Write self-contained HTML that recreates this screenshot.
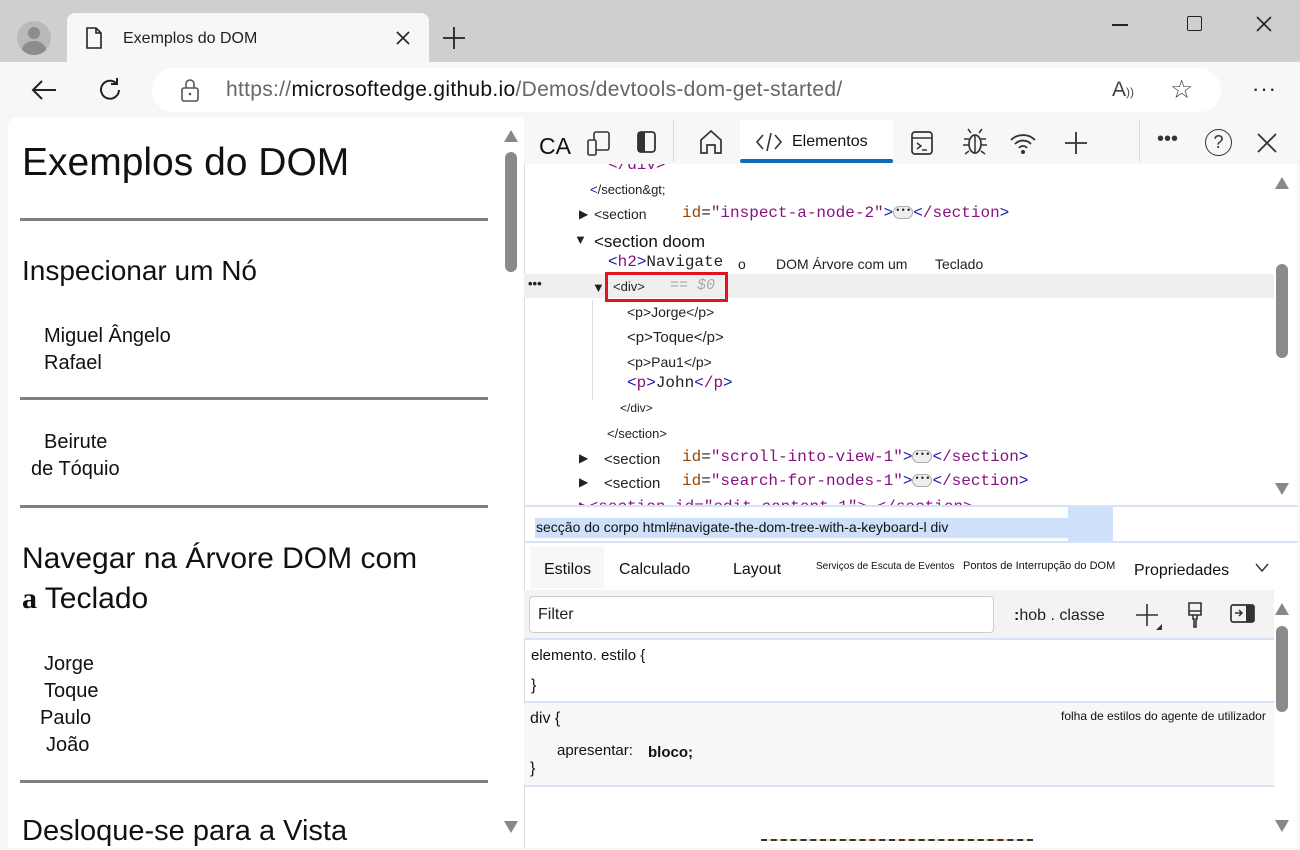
<!DOCTYPE html>
<html><head><meta charset="utf-8"><style>
*{margin:0;padding:0;box-sizing:border-box}
body{width:1300px;height:850px;overflow:hidden;background:#cfcfcf;font-family:"Liberation Sans",sans-serif;position:relative;color:#222}
.a{position:absolute}
.mono{font-family:"Liberation Mono",monospace}
.hr{position:absolute;left:20px;width:468px;height:3px;background:#808080}
.tag{color:#881280}.att{color:#994500}.val{color:#1a1aa6}
.dots{display:inline-block;width:20px;height:13px;border:1px solid #aaa;border-radius:7px;background:#eee;font-size:9px;line-height:9px;text-align:center;vertical-align:middle}
.arr{position:absolute;width:0;height:0;border-left:7px solid transparent;border-right:7px solid transparent}
.up{border-bottom:12px solid #888}.dn{border-top:12px solid #888}
</style></head><body>
<div class="a" style="left:0;top:0;width:1300px;height:62px;background:#cfcfcf;border-radius:8px 8px 0 0"></div>
<div class="a" style="left:17px;top:21px;width:34px;height:34px;border-radius:50%;background:#b9b9b9;overflow:hidden"><div class="a" style="left:11px;top:6px;width:12px;height:12px;border-radius:50%;background:#8c8c8c"></div><div class="a" style="left:5px;top:20px;width:24px;height:18px;border-radius:50%;background:#8c8c8c"></div></div>
<div class="a" style="left:67px;top:13px;width:362px;height:50px;background:#f7f7f7;border-radius:8px 8px 0 0"></div>
<svg class="a" style="left:84px;top:26px" width="20" height="24"><path d="M3 2h9l5 5v15H3z M12 2v5h5" fill="none" stroke="#222" stroke-width="1.6"/></svg>
<div class="a" style="left:123px;top:30px;font-size:16px">Exemplos do DOM</div>
<svg class="a" style="left:396px;top:31px" width="14" height="14"><path d="M1 1l12 12M13 1L1 13" stroke="#222" stroke-width="1.6"/></svg>
<svg class="a" style="left:442px;top:26px" width="24" height="24"><path d="M12 1v22M1 12h22" stroke="#222" stroke-width="1.8"/></svg>
<div class="a" style="left:1112px;top:24px;width:16px;height:1.5px;background:#222"></div>
<div class="a" style="left:1187px;top:16px;width:15px;height:15px;border:1.5px solid #222;border-radius:2px"></div>
<svg class="a" style="left:1256px;top:16px" width="16" height="16"><path d="M1 1l14 14M15 1L1 15" stroke="#222" stroke-width="1.6"/></svg>
<div class="a" style="left:0;top:62px;width:1300px;height:788px;background:#f7f7f7"></div>
<svg class="a" style="left:30px;top:78px" width="28" height="24"><path d="M26 12H3M12 3L3 12l9 9" fill="none" stroke="#222" stroke-width="2"/></svg>
<svg class="a" style="left:97px;top:76px" width="28" height="28"><path d="M22 14a9 9 0 1 1-3-7M20 2v6h-6" fill="none" stroke="#222" stroke-width="2"/></svg>
<div class="a" style="left:152px;top:68px;width:1069px;height:44px;background:#fff;border-radius:22px"></div>
<svg class="a" style="left:180px;top:78px" width="22" height="26"><rect x="2" y="10" width="16" height="13" rx="2" fill="none" stroke="#555" stroke-width="1.6"/><path d="M6 10V6a4 4 0 0 1 8 0v4" fill="none" stroke="#555" stroke-width="1.6"/><circle cx="10" cy="16" r="1.3" fill="#555"/></svg>
<div class="a" style="left:226px;top:78px;font-size:21px;color:#666;letter-spacing:0.3px">https://<span style="color:#111">microsoftedge.github.io</span>/Demos/devtools-dom-get-started/</div>
<div class="a" style="left:1112px;top:78px;font-size:21px;color:#444">A<span style="font-size:12px">))</span></div>
<div class="a" style="left:1170px;top:74px;font-size:26px;color:#444">☆</div>
<div class="a" style="left:1252px;top:76px;font-size:22px;color:#222;letter-spacing:1px">···</div>
<!-- page -->
<div class="a" style="left:8px;top:118px;width:492px;height:730px;background:#fff;border-radius:8px 0 0 0"></div>
<div class="a" style="left:500px;top:118px;width:24px;height:730px;background:#fff"></div>
<div class="a" style="left:505px;top:152px;width:12px;height:120px;border-radius:6px;background:#8a8a8a"></div>
<div class="arr up" style="left:504px;top:130px"></div>
<div class="arr dn" style="left:504px;top:821px"></div>
<div class="a" style="left:22px;top:141px;font-size:39px;color:#111">Exemplos do DOM</div>
<div class="hr" style="top:218px"></div>
<div class="a" style="left:22px;top:255px;font-size:28px;color:#111">Inspecionar um Nó</div>
<div class="a" style="left:44px;top:323px;font-size:20px;line-height:27px;color:#111">Miguel Ângelo<br>Rafael</div>
<div class="hr" style="top:397px"></div>
<div class="a" style="left:44px;top:431px;font-size:20px;color:#111">Beirute</div>
<div class="a" style="left:31px;top:458px;font-size:20px;color:#111">de Tóquio</div>
<div class="hr" style="top:505px"></div>
<div class="a" style="left:22px;top:539px;font-size:30px;line-height:40px;color:#111">Navegar na Árvore DOM com<br><b style="font-family:'Liberation Serif',serif">a</b> Teclado</div>
<div class="a" style="left:44px;top:653px;font-size:20px;color:#111">Jorge</div>
<div class="a" style="left:44px;top:680px;font-size:20px;color:#111">Toque</div>
<div class="a" style="left:40px;top:707px;font-size:20px;color:#111">Paulo</div>
<div class="a" style="left:46px;top:734px;font-size:20px;color:#111">João</div>
<div class="hr" style="top:780px"></div>
<div class="a" style="left:22px;top:815px;font-size:29px;color:#111">Desloque-se para a Vista</div>
<!-- devtools -->
<div class="a" style="left:524px;top:118px;width:774px;height:730px;background:#fff;border-left:1px solid #ddd"></div>
<div class="a" style="left:524px;top:118px;width:774px;height:46px;background:#f7f7f7"></div>
<div class="a" style="left:539px;top:133px;font-size:23px;color:#111">CA</div>
<svg class="a" style="left:586px;top:130px" width="26" height="28"><rect x="8" y="2" width="15" height="18" rx="2" fill="none" stroke="#333" stroke-width="1.6"/><rect x="2" y="10" width="8" height="15" rx="1.5" fill="#f7f7f7" stroke="#333" stroke-width="1.6"/></svg>
<svg class="a" style="left:636px;top:130px" width="22" height="24"><rect x="2" y="2" width="17" height="20" rx="3" fill="none" stroke="#333" stroke-width="1.8"/><rect x="2" y="2" width="7" height="20" fill="#333"/></svg>
<div class="a" style="left:673px;top:120px;width:1px;height:42px;background:#ddd"></div>
<svg class="a" style="left:697px;top:128px" width="28" height="28"><path d="M4 25V12l10-9 10 9v13h-6v-8h-8v8z" fill="none" stroke="#333" stroke-width="1.7"/></svg>
<div class="a" style="left:740px;top:120px;width:153px;height:42px;background:#fff"></div>
<div class="a" style="left:740px;top:159px;width:153px;height:4px;background:#0f6cbd;border-radius:2px"></div>
<svg class="a" style="left:755px;top:130px" width="28" height="24"><path d="M8 5l-6 7 6 7M20 5l6 7-6 7M16 3l-4 18" fill="none" stroke="#333" stroke-width="1.6"/></svg>
<div class="a" style="left:792px;top:133px;font-size:16px;color:#111">Elementos</div>
<svg class="a" style="left:910px;top:130px" width="28" height="28"><rect x="2" y="2" width="20" height="22" rx="3" fill="none" stroke="#333" stroke-width="1.7"/><path d="M2 8h20M7 13l4 3-4 3M12 20h5" fill="none" stroke="#333" stroke-width="1.5"/></svg>
<svg class="a" style="left:961px;top:127px" width="28" height="30"><ellipse cx="14" cy="17" rx="6" ry="9" fill="none" stroke="#333" stroke-width="1.7"/><path d="M8 12H3M20 12h5M8 18H2M20 18h6M8 24l-4 3M20 24l4 3M10 6l-3-4M18 6l3-4M14 8v18" fill="none" stroke="#333" stroke-width="1.5"/></svg>
<svg class="a" style="left:1008px;top:130px" width="30" height="26"><path d="M3 10a17 17 0 0 1 24 0M7 14a11 11 0 0 1 16 0M11 18a5 5 0 0 1 8 0" fill="none" stroke="#333" stroke-width="1.8"/><circle cx="15" cy="22" r="2" fill="#333"/></svg>
<svg class="a" style="left:1064px;top:131px" width="24" height="24"><path d="M12 1v22M1 12h22" stroke="#333" stroke-width="1.8"/></svg>
<div class="a" style="left:1139px;top:120px;width:1px;height:42px;background:#ddd"></div>
<div class="a" style="left:1157px;top:128px;font-size:20px;color:#333">•••</div>
<div class="a" style="left:1205px;top:129px;width:27px;height:27px;border:1.7px solid #333;border-radius:50%;text-align:center;font-size:18px;line-height:24px;color:#333">?</div>
<svg class="a" style="left:1257px;top:133px" width="20" height="20"><path d="M1 1l18 18M19 1L1 19" stroke="#333" stroke-width="1.8"/></svg>
<!-- DOM tree -->
<div class="a" style="left:524px;top:164px;width:750px;height:342px;overflow:hidden;font-size:13px;color:#222">
<div class="a mono tag" style="left:84px;top:-8px;font-size:16px">&lt;/div&gt;</div>
<div class="a" style="left:66px;top:18px;font-size:13px"><span style="color:#1a1aa6">&lt;</span>/section&amp;gt;</div>
<div class="a" style="left:55px;top:43px;font-size:12px">▶</div>
<div class="a" style="left:70px;top:42px;font-size:14px">&lt;section</div>
<div class="a mono" style="left:158px;top:40px;font-size:16px"><span class="att">id</span>=<span style="color:#881280">"inspect-a-node-2"</span><span class="val">&gt;</span><span class="dots">•••</span><span class="val">&lt;</span><span class="tag">/section</span><span class="val">&gt;</span></div>
<div class="a" style="left:50px;top:68px;font-size:13px">▼</div>
<div class="a" style="left:70px;top:68px;font-size:17px;color:#111">&lt;section doom</div>
<div class="a mono" style="left:84px;top:89px;font-size:16px"><span class="val">&lt;</span><span class="tag">h2</span><span class="val">&gt;</span>Navigate</div>
<div class="a" style="left:214px;top:92px;font-size:14px">o</div>
<div class="a" style="left:252px;top:92px;font-size:14px">DOM Árvore com um</div>
<div class="a" style="left:411px;top:92px;font-size:14px">Teclado</div>
<div class="a" style="left:0;top:110px;width:750px;height:24px;background:#efefef"></div>
<div class="a" style="left:4px;top:112px;font-size:13px;font-weight:bold">•••</div>
<div class="a" style="left:68px;top:116px;font-size:13px">▼</div>
<div class="a" style="left:81px;top:108px;width:123px;height:30px;border:3px solid #e0141e"></div>
<div class="a" style="left:89px;top:115px;font-size:13px">&lt;div&gt;</div>
<div class="a mono" style="left:146px;top:113px;font-size:15px;color:#aaa;font-style:italic">== $0</div>
<div class="a" style="left:68px;top:136px;width:1px;height:100px;background:#ddd"></div>
<div class="a" style="left:103px;top:140px;font-size:14px">&lt;p&gt;Jorge&lt;/p&gt;</div>
<div class="a" style="left:103px;top:165px;font-size:15px">&lt;p&gt;Toque&lt;/p&gt;</div>
<div class="a" style="left:103px;top:190px;font-size:14px">&lt;p&gt;Pau1&lt;/p&gt;</div>
<div class="a mono" style="left:103px;top:210px;font-size:16px"><span class="val">&lt;</span><span class="tag">p</span><span class="val">&gt;</span>John<span class="val">&lt;</span><span class="tag">/p</span><span class="val">&gt;</span></div>
<div class="a" style="left:96px;top:237px;font-size:12px">&lt;/div&gt;</div>
<div class="a" style="left:83px;top:262px;font-size:13px">&lt;/section&gt;</div>
<div class="a" style="left:55px;top:287px;font-size:12px">▶</div>
<div class="a" style="left:80px;top:287px;font-size:15px">&lt;section</div>
<div class="a mono" style="left:158px;top:284px;font-size:16px"><span class="att">id</span>=<span style="color:#881280">"scroll-into-view-1"</span><span class="val">&gt;</span><span class="dots">•••</span><span class="val">&lt;</span><span class="tag">/section</span><span class="val">&gt;</span></div>
<div class="a" style="left:55px;top:311px;font-size:12px">▶</div>
<div class="a" style="left:80px;top:311px;font-size:15px">&lt;section</div>
<div class="a mono" style="left:158px;top:308px;font-size:16px"><span class="att">id</span>=<span style="color:#881280">"search-for-nodes-1"</span><span class="val">&gt;</span><span class="dots">•••</span><span class="val">&lt;</span><span class="tag">/section</span><span class="val">&gt;</span></div>
<div class="a mono" style="left:55px;top:332px;font-size:16px"><span class="tag">▶&lt;section id="edit-content-1"&gt; &lt;/section&gt;</span></div>
</div>
<div class="arr up" style="left:1275px;top:177px"></div>
<div class="arr dn" style="left:1275px;top:483px"></div>
<div class="a" style="left:1276px;top:264px;width:12px;height:94px;border-radius:6px;background:#8a8a8a"></div>
<div class="a" style="left:524px;top:505px;width:774px;height:2px;background:#d6e3f7"></div>
<div class="a" style="left:535px;top:518px;width:533px;height:20px;background:#cfe0fa"></div>
<div class="a" style="left:1068px;top:507px;width:45px;height:35px;background:#cfe0fa"></div>
<div class="a" style="left:536px;top:519px;font-size:14px;color:#111">secção do corpo html#navigate-the-dom-tree-with-a-keyboard-l div</div>
<div class="a" style="left:524px;top:541px;width:774px;height:2px;background:#d6e3f7"></div>
<div class="a" style="left:530px;top:546px;width:74px;height:42px;background:#f7f7f7"></div>
<div class="a" style="left:544px;top:561px;font-size:16px;color:#111">Estilos</div>
<div class="a" style="left:619px;top:561px;font-size:16px;color:#111">Calculado</div>
<div class="a" style="left:733px;top:561px;font-size:16px;color:#111">Layout</div>
<div class="a" style="left:816px;top:561px;font-size:10px;color:#111">Serviços de Escuta de Eventos</div>
<div class="a" style="left:963px;top:560px;font-size:11px;color:#111">Pontos de Interrupção do DOM</div>
<div class="a" style="left:1134px;top:562px;font-size:16px;color:#111">Propriedades</div>
<svg class="a" style="left:1255px;top:563px" width="14" height="10"><path d="M1 1l6 7 6-7" fill="none" stroke="#333" stroke-width="1.4"/></svg>
<div class="a" style="left:524px;top:590px;width:750px;height:48px;background:#f3f3f3"></div>
<div class="a" style="left:529px;top:596px;width:465px;height:37px;background:#fff;border:1px solid #ccc;border-radius:4px"></div>
<div class="a" style="left:538px;top:606px;font-size:16px;color:#222">Filter</div>
<div class="a" style="left:1014px;top:607px;font-size:16px;color:#222"><b>:</b>hob . classe</div>
<svg class="a" style="left:1136px;top:603px" width="28" height="28"><path d="M11 1v22M0 12h22" stroke="#333" stroke-width="1.6"/><path d="M26 21v6h-6z" fill="#333"/></svg>
<svg class="a" style="left:1185px;top:601px" width="20" height="28"><path d="M4 2h12v12H4zM4 10h12M8 14v4h1v8h2v-8h1v-4" fill="none" stroke="#333" stroke-width="1.6"/></svg>
<svg class="a" style="left:1229px;top:603px" width="28" height="22"><rect x="2" y="2" width="23" height="17" rx="2" fill="none" stroke="#333" stroke-width="1.7"/><rect x="17" y="2" width="8" height="17" fill="#333"/><path d="M6 10h7M10 7l3 3-3 3" fill="none" stroke="#333" stroke-width="1.5"/></svg>
<div class="a" style="left:524px;top:638px;width:750px;height:2px;background:#d6e3f7"></div>
<div class="a" style="left:531px;top:647px;font-size:15px;color:#111">elemento. estilo {</div>
<div class="a" style="left:531px;top:677px;font-size:16px;color:#111">}</div>
<div class="a" style="left:524px;top:701px;width:750px;height:2px;background:#d6e3f7"></div>
<div class="a" style="left:524px;top:703px;width:750px;height:82px;background:#f7f7f7"></div>
<div class="a" style="left:530px;top:710px;font-size:16px;color:#111">div {</div>
<div class="a" style="left:1061px;top:709px;font-size:12px;color:#111">folha de estilos do agente de utilizador</div>
<div class="a" style="left:557px;top:742px;font-size:15px;color:#111">apresentar:</div>
<div class="a" style="left:648px;top:744px;font-size:15px;color:#111;font-weight:bold">bloco;</div>
<div class="a" style="left:530px;top:760px;font-size:16px;color:#111">}</div>
<div class="a" style="left:524px;top:785px;width:750px;height:2px;background:#d6e3f7"></div>
<div class="a" style="left:761px;top:839px;width:272px;height:2px;border-top:2px dashed #333;background:#fbd9a6"></div>
<div class="arr up" style="left:1275px;top:603px"></div>
<div class="arr dn" style="left:1275px;top:820px"></div>
<div class="a" style="left:1276px;top:626px;width:12px;height:86px;border-radius:6px;background:#8a8a8a"></div>
</body></html>
